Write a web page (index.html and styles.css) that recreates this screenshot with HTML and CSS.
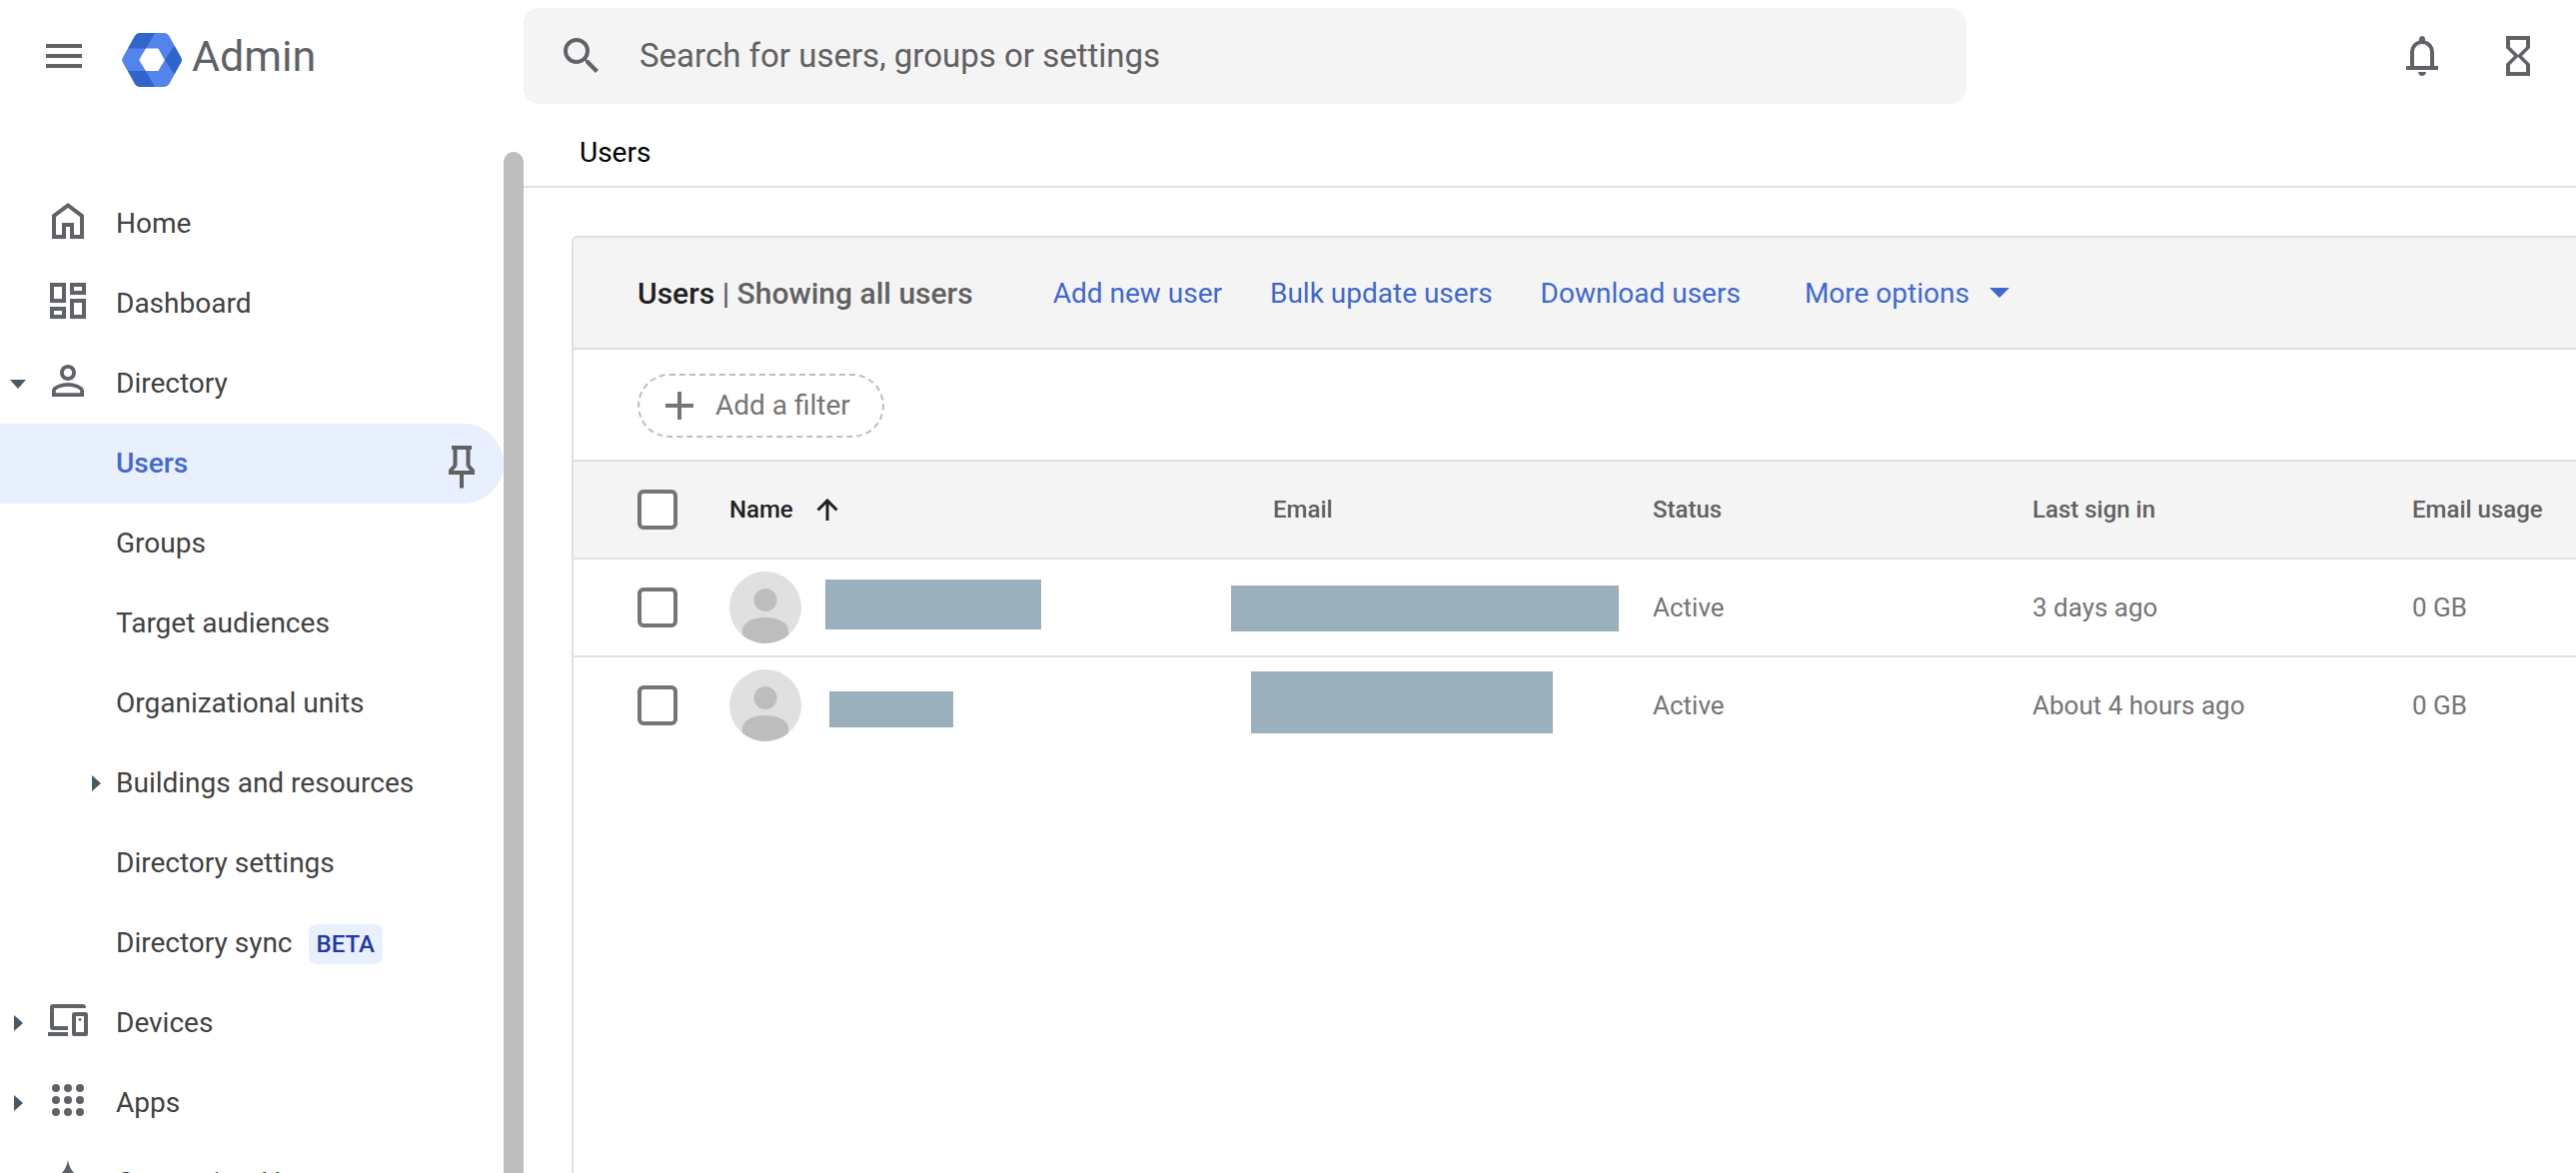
FILE: index.html
```
<!DOCTYPE html>
<html lang="en">
<head>
<meta charset="utf-8">
<title>Admin - Users</title>
<link rel="stylesheet" href="styles.css">
</head>
<body>
<div class="app">
  <header class="topbar">
    <div class="brand">
      <button class="icon-button" type="button" aria-label="Main menu">
        <svg class="icon" viewBox="0 0 24 24"><path d="M3 6h18v2H3zM3 11h18v2H3zM3 16h18v2H3z"/></svg>
      </button>
      <a class="logo" href="#">
        <svg class="logo-mark" viewBox="0 0 178 160" aria-hidden="true">
          <path fill="#5383ec" d="M53 0h73q9 0 14 8l35 64q5 8 0 16l-35 64q-5 8-14 8H53q-9 0-14-8L3 88q-5-8 0-16L39 8q5-8 14-8z"/>
          <path fill="#3066cc" d="M53 0h45L71 46H18L39 8q5-8 14-8zM53 160h45l-27-47H18l21 39q5 8 14 8zM156 38l19 34q5 8 0 16l-19 34-29-42z"/>
          <path fill="#fff" d="M71 46h37l19 34-19 33H71L51 80z"/>
        </svg>
        <span>Admin</span>
      </a>
    </div>
    <form class="search" role="search">
      <svg class="icon" viewBox="0 0 24 24" aria-hidden="true"><path d="M15.5 14h-.79l-.28-.27A6.47 6.47 0 0 0 16 9.5 6.5 6.5 0 1 0 9.5 16c1.61 0 3.09-.59 4.23-1.57l.27.28v.79l5 4.99L20.49 19l-4.99-5zm-6 0C7.01 14 5 11.99 5 9.5S7.01 5 9.5 5 14 7.01 14 9.5 11.99 14 9.5 14z"/></svg>
      <input class="search-input" type="search" aria-label="Search" placeholder="Search for users, groups or settings">
    </form>
    <div class="actions">
      <button class="icon-button" type="button" aria-label="Notifications">
        <svg class="icon" viewBox="0 0 24 24"><path d="M4 19v-2h2v-7q0-2.075 1.25-3.687T10.5 4.2v-.7q0-.625.438-1.062T12 2t1.063.438T13.5 3.5v.7q2 .5 3.25 2.113T18 10v7h2v2zm8 3q-.825 0-1.412-.587T10 20h4q0 .825-.587 1.413T12 22m-4-5h8v-7q0-1.650-1.175-2.825T12 6T9.175 7.175T8 10z"/></svg>
      </button>
      <button class="icon-button" type="button" aria-label="Tasks">
        <svg class="icon" viewBox="0 0 24 24"><path d="M6 2v6h.01L6 8.01 10 12l-4 4 .01.01H6V22h12v-5.99h-.01L18 16l-4-4 4-3.99-.01-.01H18V2H6zm10 14.5V20H8v-3.5l4-4 4 4zm-4-5l-4-4V4h8v3.5l-4 4z"/></svg>
      </button>
    </div>
  </header>

  <div class="body">
    <aside class="sidebar">
      <nav class="nav" aria-label="Main">
        <a class="nav-item" href="#">
          <span class="caret-slot"></span>
          <svg class="icon nav-icon" viewBox="0 0 24 24"><path fill-rule="evenodd" d="M4 21V9l8-6 8 6v12h-7v-6h-2v6zm2-2h3v-6h6v6h3v-9l-6-4.500L6 10z"/></svg>
          <span>Home</span>
        </a>
        <a class="nav-item" href="#">
          <span class="caret-slot"></span>
          <svg class="icon nav-icon" viewBox="0 0 24 24"><path fill-rule="evenodd" d="M3 3h8v10H3zm2 2v6h4V5zM13 3h8v6h-8zm2 2v2h4V5zM3 15h8v6H3zm2 2v2h4v-2zM13 11h8v10h-8zm2 2v6h4v-6z"/></svg>
          <span>Dashboard</span>
        </a>
        <a class="nav-item" href="#">
          <span class="caret-slot"><svg class="caret" viewBox="0 0 16 16"><path d="M0 4h16l-8 9z"/></svg></span>
          <svg class="icon nav-icon" viewBox="0 0 24 24"><path d="M12 5.900c1.160 0 2.100.940 2.100 2.100s-.940 2.100-2.100 2.100S9.900 9.160 9.900 8s.940-2.100 2.100-2.100m0 9c2.970 0 6.100 1.460 6.100 2.100v1.100H5.900V17c0-.640 3.130-2.100 6.100-2.100M12 4C9.790 4 8 5.790 8 8s1.790 4 4 4 4-1.790 4-4-1.790-4-4-4zm0 9c-2.670 0-8 1.340-8 4v3h16v-3c0-2.660-5.330-4-8-4z"/></svg>
          <span>Directory</span>
        </a>
        <a class="nav-item nav-sub nav-current" href="#" aria-current="page">
          <span class="caret-slot"></span>
          <span>Users</span>
          <svg class="pin" viewBox="0 0 28 44"><path d="M4 2h20M7.500 3v17.500M20.500 3v17.500M7.500 20 3 25v2h22v-2l-4.500-5"/><path d="M14 27v15.500"/></svg>
        </a>
        <a class="nav-item nav-sub" href="#"><span class="caret-slot"></span><span>Groups</span></a>
        <a class="nav-item nav-sub" href="#"><span class="caret-slot"></span><span>Target audiences</span></a>
        <a class="nav-item nav-sub" href="#"><span class="caret-slot"></span><span>Organizational units</span></a>
        <a class="nav-item nav-sub" href="#"><span class="caret-slot"><svg class="caret" viewBox="0 0 16 16"><path d="M4 0v16l9-8z"/></svg></span><span>Buildings and resources</span></a>
        <a class="nav-item nav-sub" href="#"><span class="caret-slot"></span><span>Directory settings</span></a>
        <a class="nav-item nav-sub" href="#"><span class="caret-slot"></span><span>Directory sync</span><span class="badge">BETA</span></a>
        <a class="nav-item" href="#">
          <span class="caret-slot"><svg class="caret" viewBox="0 0 16 16"><path d="M4 0v16l9-8z"/></svg></span>
          <svg class="icon nav-icon" viewBox="0 0 24 24"><path fill-rule="evenodd" d="M12 17H4.500Q3 17 3 15.500v-10Q3 4 4.500 4h15Q21 4 21 6H5v9h7zM2 18h10v2H2zM15.300 8h5.400Q22 8 22 9.300v9.400q0 1.300-1.300 1.300h-5.400Q14 20 14 18.700V9.300Q14 8 15.300 8zm.7 2v8h4v-8z"/><circle cx="18" cy="11.700" r=".7"/></svg>
          <span>Devices</span>
        </a>
        <a class="nav-item" href="#">
          <span class="caret-slot"><svg class="caret" viewBox="0 0 16 16"><path d="M4 0v16l9-8z"/></svg></span>
          <svg class="icon nav-icon" viewBox="0 0 24 24"><circle cx="6" cy="6" r="2"/><circle cx="12" cy="6" r="2"/><circle cx="18" cy="6" r="2"/><circle cx="6" cy="12" r="2"/><circle cx="12" cy="12" r="2"/><circle cx="18" cy="12" r="2"/><circle cx="6" cy="18" r="2"/><circle cx="12" cy="18" r="2"/><circle cx="18" cy="18" r="2"/></svg>
          <span>Apps</span>
        </a>
        <a class="nav-item" href="#">
          <span class="caret-slot"><svg class="caret" viewBox="0 0 16 16"><path d="M4 0v16l9-8z"/></svg></span>
          <svg class="icon nav-icon" viewBox="0 0 24 24"><path d="M12 2Q13.500 10.500 22 12 13.500 13.500 12 22 10.500 13.500 2 12 10.500 10.500 12 2z"/></svg>
          <span>Generative AI</span>
        </a>
      </nav>
      <div class="scrollbar"></div>
    </aside>

    <main class="main">
      <h1 class="breadcrumb">Users</h1>
      <section class="card">
        <div class="toolbar">
          <h2 class="title"><strong>Users</strong> | Showing all users</h2>
          <a class="action" href="#">Add new user</a>
          <a class="action" href="#">Bulk update users</a>
          <a class="action" href="#">Download users</a>
          <button class="action more" type="button">More options
            <svg class="more-caret" viewBox="0 0 20 10"><path d="M0 0h20L10 10z"/></svg>
          </button>
        </div>
        <div class="filters">
          <button class="filter" type="button">
            <svg class="plus" viewBox="0 0 28 28"><path d="M12 0h4v12h12v4H16v12h-4V16H0v-4h12z"/></svg>
            Add a filter
          </button>
        </div>
        <table class="users">
          <colgroup>
            <col class="col-check"><col class="col-name"><col class="col-data"><col class="col-data"><col class="col-data"><col>
          </colgroup>
          <thead>
            <tr>
              <th class="check"><input type="checkbox" aria-label="Select all users"></th>
              <th class="sorted" aria-sort="ascending"><span class="sort">Name
                <svg class="sort-arrow" viewBox="0 0 22 22"><path d="M11 22V2M1.500 11.500 11 2l9.500 9.500"/></svg></span></th>
              <th>Email</th>
              <th>Status</th>
              <th>Last sign in</th>
              <th>Email usage</th>
            </tr>
          </thead>
          <tbody>
            <tr>
              <td class="check"><input type="checkbox" aria-label="Select first user"></td>
              <td><svg class="avatar" viewBox="0 0 72 72"><circle cx="36" cy="36" r="36" fill="#e0e0e0"/><circle cx="36" cy="28.500" r="11.500" fill="#bdbdbd"/><path fill="#bdbdbd" d="M13 63.700V59c0-9 12-13 23-13s23 4 23 13v4.700A36 36 0 0 1 13 63.700z"/></svg><span class="mask mask-name-1"></span></td>
              <td><span class="mask mask-email-1"></span></td>
              <td>Active</td>
              <td>3 days ago</td>
              <td>0 GB</td>
            </tr>
            <tr>
              <td class="check"><input type="checkbox" aria-label="Select second user"></td>
              <td><svg class="avatar" viewBox="0 0 72 72"><circle cx="36" cy="36" r="36" fill="#e0e0e0"/><circle cx="36" cy="28.500" r="11.500" fill="#bdbdbd"/><path fill="#bdbdbd" d="M13 63.700V59c0-9 12-13 23-13s23 4 23 13v4.700A36 36 0 0 1 13 63.700z"/></svg><span class="mask mask-name-2"></span></td>
              <td><span class="mask mask-email-2"></span></td>
              <td>Active</td>
              <td>About 4 hours ago</td>
              <td>0 GB</td>
            </tr>
          </tbody>
        </table>
      </section>
    </main>
  </div>
</div>
</body>
</html>
```
FILE: styles.css
```
:root {
  --line: #e0e0e0;
  --surface: #f4f4f4;
  --icon: #5f6368;
  --blue: #4068d1;
  --blue-soft: #e8effd;
}

* { box-sizing: border-box; }

body {
  margin: 0;
  background: #fff;
  color: #424242;
  font: 28px/40px Roboto, sans-serif;
}

button {
  margin: 0;
  padding: 0;
  border: 0;
  background: none;
  color: inherit;
  font: inherit;
}

a { color: inherit; text-decoration: none; }
svg { display: block; flex: none; }

.icon { width: 48px; height: 48px; fill: var(--icon); }

.app {
  display: flex;
  flex-direction: column;
  height: 100vh;
  overflow: hidden;
}

/* Top bar */
.topbar {
  display: flex;
  align-items: center;
  flex: none;
  padding: 8px 34px 8px 0;
}

.brand {
  display: flex;
  align-items: center;
  flex: none;
  gap: 34px;
  width: 524px;
  padding-left: 40px;
}

.logo {
  display: flex;
  align-items: center;
  gap: 10px;
  color: var(--icon);
  font-size: 43px;
}

.logo-mark { width: 60px; height: 54px; margin-top: 8px; }

.search {
  display: flex;
  align-items: center;
  flex: 1 1 auto;
  gap: 34px;
  max-width: 1444px;
  height: 96px;
  padding: 0 34px;
  border-radius: 16px;
  background: var(--surface);
}

.search-input {
  flex: 1;
  min-width: 0;
  padding: 0;
  border: 0;
  outline: 0;
  background: none;
  color: #616161;
  font: 33px/48px Roboto, sans-serif;
}

.search-input::placeholder { color: #616161; opacity: 1; }

.actions { display: flex; gap: 48px; margin-left: auto; }

/* Sidebar */
.body { display: flex; flex: 1; min-height: 0; }

.sidebar { display: flex; flex: none; width: 524px; }

.nav {
  flex: 1;
  padding-top: 72px;
  overflow: hidden;
}

.nav-item {
  display: flex;
  align-items: center;
  height: 80px;
}

.caret-slot { display: flex; flex: none; width: 34px; margin-right: 10px; padding-left: 10px; }
.caret { width: 16px; height: 16px; fill: #455a64; }
.nav-icon { margin: 0 24px 6px 0; }

.nav-sub .caret-slot { width: 28px; margin: 0 0 0 88px; padding-left: 0; }

.nav-current {
  border-radius: 0 40px 40px 0;
  background: var(--blue-soft);
  color: var(--blue);
  font-weight: 500;
}

.pin {
  width: 28px;
  height: 44px;
  margin: 8px 28px 0 auto;
  fill: none;
  stroke: #616161;
  stroke-width: 4;
}

.badge {
  margin: 2px 0 0 16px;
  padding: 0 8px;
  border-radius: 8px;
  background: var(--blue-soft);
  color: #2339a5;
  font-size: 24px;
  font-weight: 500;
}

.scrollbar {
  flex: none;
  width: 20px;
  margin-top: 40px;
  border-radius: 10px 10px 0 0;
  background: #bdbdbd;
}

/* Main */
.main {
  display: flex;
  flex: 1;
  flex-direction: column;
  min-width: 0;
}

.breadcrumb {
  margin: 0;
  padding: 21px 56px 13px;
  border-bottom: 2px solid var(--line);
  color: #000;
  font-size: 28px;
  font-weight: 400;
}

.card {
  flex: 1;
  margin: 48px 0 0 48px;
  border: solid var(--line);
  border-width: 2px 0 0 2px;
  border-radius: 6px 0 0 0;
  overflow: hidden;
}

.toolbar,
.filters {
  display: flex;
  align-items: center;
  height: 112px;
  padding: 2px 64px 0;
  border-bottom: 2px solid var(--line);
  white-space: nowrap;
}

.toolbar { gap: 48px; background: var(--surface); }

.title {
  margin: 0 32px 0 0;
  color: #616161;
  font-size: 30px;
  font-weight: 500;
}

.title strong { color: #212121; font-weight: 500; }

.action { color: var(--blue); }
.more { display: flex; align-items: center; gap: 20px; margin-left: 16px; }
.more-caret { width: 20px; height: 10px; margin-bottom: 2px; fill: var(--blue); }

.filter {
  display: flex;
  align-items: center;
  gap: 22px;
  height: 64px;
  padding: 0 32px 0 26px;
  border: 2px dashed #bdbdbd;
  border-radius: 32px;
  color: #757575;
}

.plus { width: 28px; height: 28px; fill: #757575; }

/* Users table */
.users {
  width: 100%;
  border-collapse: separate;
  border-spacing: 0;
  table-layout: fixed;
  color: #757575;
  font-size: 26px;
  text-align: left;
  white-space: nowrap;
}

.col-check { width: 156px; }
.col-name { width: 544px; }
.col-data { width: 380px; }

.users th,
.users td {
  position: relative;
  height: 98px;
  padding: 0;
  border-bottom: 2px solid var(--line);
}

.users tbody tr:last-child td { border-bottom-color: transparent; }

.users th {
  background: var(--surface);
  color: #616161;
  font-size: 24px;
  font-weight: 500;
}

.users th.sorted { color: #212121; }
.users .check { padding-left: 64px; }

.check input {
  display: block;
  width: 40px;
  height: 40px;
  margin: 0;
  border: 4px solid #757575;
  border-radius: 6px;
  background: #fff;
  appearance: none;
}

.sort { display: flex; align-items: center; gap: 23px; }
.sort-arrow { width: 22px; height: 22px; fill: none; stroke: #212121; stroke-width: 3; }
.avatar { width: 72px; height: 72px; }

/* Blocks laid over private names and addresses */
.mask { position: absolute; background: #9ab0bd; }
.mask-name-1 { top: 20px; left: 96px; width: 216px; height: 50px; }
.mask-email-1 { top: 26px; left: -42px; width: 388px; height: 46px; }
.mask-name-2 { top: 34px; left: 100px; width: 124px; height: 36px; }
.mask-email-2 { top: 14px; left: -22px; width: 302px; height: 62px; }
```
